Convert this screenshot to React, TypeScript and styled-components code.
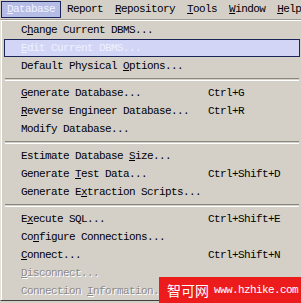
import React from 'react';
import styled, { createGlobalStyle } from 'styled-components';

const GlobalStyle = createGlobalStyle`
  html, body {
    margin: 0;
    padding: 0;
    background: #d4d0c8;
    overflow: hidden;
  }
`;

const mono = `"Liberation Mono", "DejaVu Sans Mono", monospace`;

const Screen = styled.div`
  position: relative;
  width: 301px;
  height: 303px;
  overflow: hidden;
  background: #d4d0c8;
  font-family: ${mono};
  font-size: 11px;
  letter-spacing: -0.6px;
  color: #000;
`;

const MenuBar = styled.div`
  display: flex;
  height: 19px;
  padding-left: 1px;
  box-sizing: border-box;
  white-space: nowrap;
`;

const BarItem = styled.div<{ $active?: boolean }>`
  height: 17px;
  margin-top: 1px;
  padding: 0 5px;
  line-height: 15px;
  box-sizing: border-box;
  border: 1px solid ${(p) => (p.$active ? '#1b2558' : 'transparent')};
  background: ${(p) => (p.$active ? '#b5bde6' : 'transparent')};
  color: ${(p) => (p.$active ? '#f2f3ff' : '#000')};
`;

const Key = styled.span`
  text-decoration: underline;
  text-underline-offset: 1px;
`;

const Dropdown = styled.div`
  width: 304px;
  box-sizing: border-box;
  border: 1px solid;
  border-color: #9d9a93 #404040 #404040 #e6e3dc;
  box-shadow: inset 1px 1px 0 #fff;
  padding: 1px 3px 0 3px;
`;

const Item = styled.div<{ $hover?: boolean; $disabled?: boolean }>`
  display: grid;
  grid-template-columns: 187px auto;
  height: 18px;
  line-height: 16px;
  box-sizing: border-box;
  padding-left: 16px;
  white-space: nowrap;
  border: 1px solid ${(p) => (p.$hover ? '#1b2558' : 'transparent')};
  background: ${(p) => (p.$hover ? '#d3d5f6' : 'transparent')};
  color: ${(p) => (p.$hover ? '#eef0ff' : p.$disabled ? '#8d8b86' : '#000')};
  text-shadow: ${(p) => (p.$disabled ? '1px 1px 0 #fff' : 'none')};
`;

const Separator = styled.div`
  height: 9px;
  display: flex;
  align-items: center;
  padding: 0 1px;

  &::before {
    content: '';
    flex: 1;
    height: 1px;
    border-top: 1px solid #8a877f;
    border-bottom: 1px solid #fff;
  }
`;

const Watermark = styled.div`
  position: absolute;
  right: 0;
  bottom: 0;
  width: 142px;
  height: 26px;
  box-sizing: border-box;
  background: #ec1c1c;
  display: flex;
  align-items: center;
  padding-left: 8px;
  gap: 5px;
  color: #fff;
  white-space: nowrap;
`;

const Brand = styled.span`
  font-family: "Noto Sans CJK SC", sans-serif;
  font-size: 14px;
  letter-spacing: 0;
`;

const Url = styled.span`
  font-family: ${mono};
  font-size: 11px;
  letter-spacing: -0.6px;
`;

type Entry =
  | { sep: true }
  | { label: React.ReactNode; shortcut?: string; hover?: boolean; disabled?: boolean };

const entries: Entry[] = [
  { label: <>C<Key>h</Key>ange Current DBMS...</> },
  { label: <><Key>E</Key>dit Current DBMS...</>, hover: true },
  { label: <>Default Physical <Key>O</Key>ptions...</> },
  { sep: true },
  { label: <><Key>G</Key>enerate Database...</>, shortcut: 'Ctrl+G' },
  { label: <><Key>R</Key>everse Engineer Database...</>, shortcut: 'Ctrl+R' },
  { label: <>Modify Database...</> },
  { sep: true },
  { label: <>Estimate Database <Key>S</Key>ize...</> },
  { label: <>Generate <Key>T</Key>est Data...</>, shortcut: 'Ctrl+Shift+D' },
  { label: <>Generate E<Key>x</Key>traction Scripts...</> },
  { sep: true },
  { label: <>E<Key>x</Key>ecute SQL...</>, shortcut: 'Ctrl+Shift+E' },
  { label: <>Co<Key>n</Key>figure Connections...</> },
  { label: <><Key>C</Key>onnect...</>, shortcut: 'Ctrl+Shift+N' },
  { label: <><Key>D</Key>isconnect...</>, disabled: true },
  { label: <>Connection <Key>I</Key>nformation...</>, disabled: true },
];

export default function App() {
  return (
    <>
      <GlobalStyle />
      <Screen>
        <MenuBar>
          <BarItem $active><Key>D</Key>atabase</BarItem>
          <BarItem>Report</BarItem>
          <BarItem><Key>R</Key>epository</BarItem>
          <BarItem><Key>T</Key>ools</BarItem>
          <BarItem><Key>W</Key>indow</BarItem>
          <BarItem><Key>H</Key>elp</BarItem>
        </MenuBar>
        <Dropdown>
          {entries.map((e, i) =>
            'sep' in e ? (
              <Separator key={i} />
            ) : (
              <Item key={i} $hover={e.hover} $disabled={e.disabled}>
                <span>{e.label}</span>
                <span>{e.shortcut}</span>
              </Item>
            )
          )}
        </Dropdown>
        <Watermark>
          <Brand>智可网</Brand>
          <Url>www.hzhike.com</Url>
        </Watermark>
      </Screen>
    </>
  );
}
